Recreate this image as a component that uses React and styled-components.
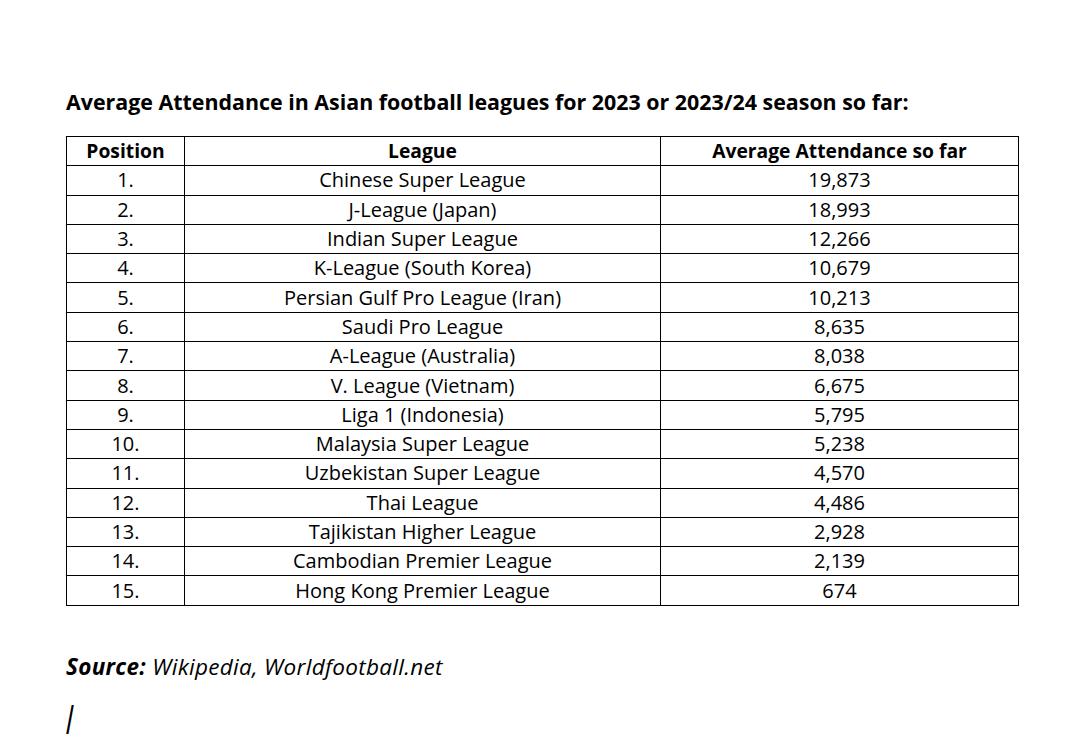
import React from 'react';
import styled, { createGlobalStyle } from 'styled-components';

const GlobalStyle = createGlobalStyle`
  html, body {
    margin: 0;
    padding: 0;
    background: #ffffff;
  }
  body {
    font-family: "Open Sans", Lato, sans-serif;
    color: #000000;
  }
`;

const Page = styled.div`
  width: 1079px;
  height: 734px;
  overflow: hidden;
  padding: 88px 0 0 66px;
  box-sizing: border-box;
`;

const Title = styled.h1`
  margin: 0 0 20px 0;
  font-size: 21.4px;
  line-height: 28px;
  font-weight: 700;
  white-space: nowrap;
`;

const Table = styled.table`
  border-collapse: collapse;
  width: 952px;
  table-layout: fixed;
`;

const Cell = styled.td`
  border: 1px solid #000;
  height: 28.3px;
  padding: 0;
  text-align: center;
  font-size: ${(p) => (p.head ? '19.3px' : '20px')};
  line-height: 22px;
  font-weight: ${(p) => (p.head ? 700 : 400)};
  white-space: nowrap;
`;

const Source = styled.p`
  margin: 47px 0 0 0;
  font-size: 22.5px;
  font-style: italic;
  letter-spacing: 0.3px;
  line-height: 28px;
  b {
    font-weight: 700;
  }
`;

const Slash = styled.div`
  margin-top: 20px;
  font-family: "Liberation Sans", sans-serif;
  font-size: 40px;
  line-height: 40px;
  font-weight: 400;
  transform: scaleX(0.7);
  transform-origin: left;
`;

const rows = [
  ['Chinese Super League', '19,873'],
  ['J-League (Japan)', '18,993'],
  ['Indian Super League', '12,266'],
  ['K-League (South Korea)', '10,679'],
  ['Persian Gulf Pro League (Iran)', '10,213'],
  ['Saudi Pro League', '8,635'],
  ['A-League (Australia)', '8,038'],
  ['V. League (Vietnam)', '6,675'],
  ['Liga 1 (Indonesia)', '5,795'],
  ['Malaysia Super League', '5,238'],
  ['Uzbekistan Super League', '4,570'],
  ['Thai League', '4,486'],
  ['Tajikistan Higher League', '2,928'],
  ['Cambodian Premier League', '2,139'],
  ['Hong Kong Premier League', '674'],
];

const App = () => {
  return (
    <Page>
      <GlobalStyle />
      <Title>Average Attendance in Asian football leagues for 2023 or 2023/24 season so far:</Title>
      <Table>
        <colgroup>
          <col style={{ width: 118 }} />
          <col style={{ width: 476 }} />
          <col style={{ width: 358 }} />
        </colgroup>
        <thead>
          <tr>
            <Cell as='th' head>Position</Cell>
            <Cell as='th' head>League</Cell>
            <Cell as='th' head>Average Attendance so far</Cell>
          </tr>
        </thead>
        <tbody>
          {rows.map(([league, avg], i) => (
            <tr key={league}>
              <Cell>{i + 1}.</Cell>
              <Cell>{league}</Cell>
              <Cell>{avg}</Cell>
            </tr>
          ))}
        </tbody>
      </Table>
      <Source>
        <b>Source:</b> Wikipedia, Worldfootball.net
      </Source>
      <Slash>/</Slash>
    </Page>
  );
};

export default App;
